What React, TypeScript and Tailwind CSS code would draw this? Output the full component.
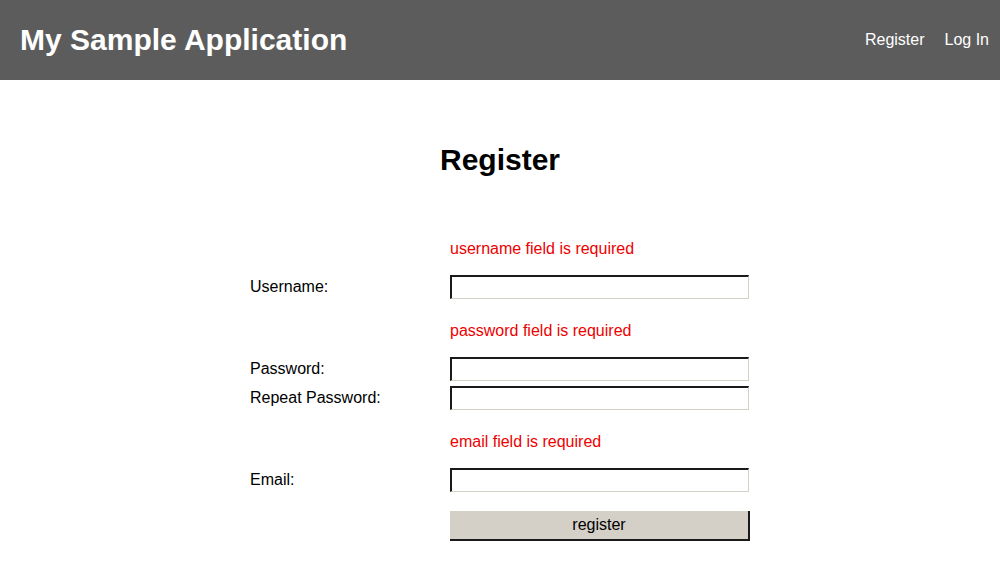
import React from "react";

const font = { fontFamily: '"Liberation Sans", Arial, sans-serif' };

function Input() {
  return (
    <div className="h-[24px] w-[299px] bg-white border-t-2 border-l-2 border-t-[#1a1a1a] border-l-[#1a1a1a] border-b border-r border-b-[#d4d0c8] border-r-[#d4d0c8]" />
  );
}

function Error({ text }: { text: string }) {
  return (
    <div className="grid grid-cols-[200px_300px] h-[20px] items-center">
      <div />
      <div className="text-[16px] leading-[20px] text-[#ee0000]">{text}</div>
    </div>
  );
}

function Row({ label }: { label: string }) {
  return (
    <div className="grid grid-cols-[200px_300px] items-center h-[24px]">
      <div className="text-[16px] leading-[20px] text-black">{label}</div>
      <Input />
    </div>
  );
}

export default function App() {
  return (
    <div className="min-h-[577px] bg-white" style={font}>
      <header className="h-[80px] bg-[#5c5c5c] flex items-center justify-between pl-[20px] pr-[11px]">
        <div className="text-white font-bold text-[30px] leading-none">My Sample Application</div>
        <nav className="flex gap-[20px] text-white text-[16px]">
          <span>Register</span>
          <span>Log In</span>
        </nav>
      </header>
      <main className="flex flex-col items-center">
        <h1 className="mt-[63px] text-[30px] leading-[34px] font-bold text-black">Register</h1>
        <div className="w-[500px] mt-[62px] flex flex-col">
          <Error text="username field is required" />
          <div className="h-[16px]" />
          <Row label="Username:" />
          <div className="h-[22px]" />
          <Error text="password field is required" />
          <div className="h-[16px]" />
          <Row label="Password:" />
          <div className="h-[5px]" />
          <Row label="Repeat Password:" />
          <div className="h-[22px]" />
          <Error text="email field is required" />
          <div className="h-[16px]" />
          <Row label="Email:" />
          <div className="h-[19px]" />
          <div className="grid grid-cols-[200px_300px]">
            <div />
            <button className="h-[30px] w-[300px] bg-[#d4d0c8] border-b-2 border-r-2 border-b-[#1a1a1a] border-r-[#1a1a1a] text-[16px] text-black leading-none" style={font}>
              register
            </button>
          </div>
        </div>
      </main>
    </div>
  );
}
